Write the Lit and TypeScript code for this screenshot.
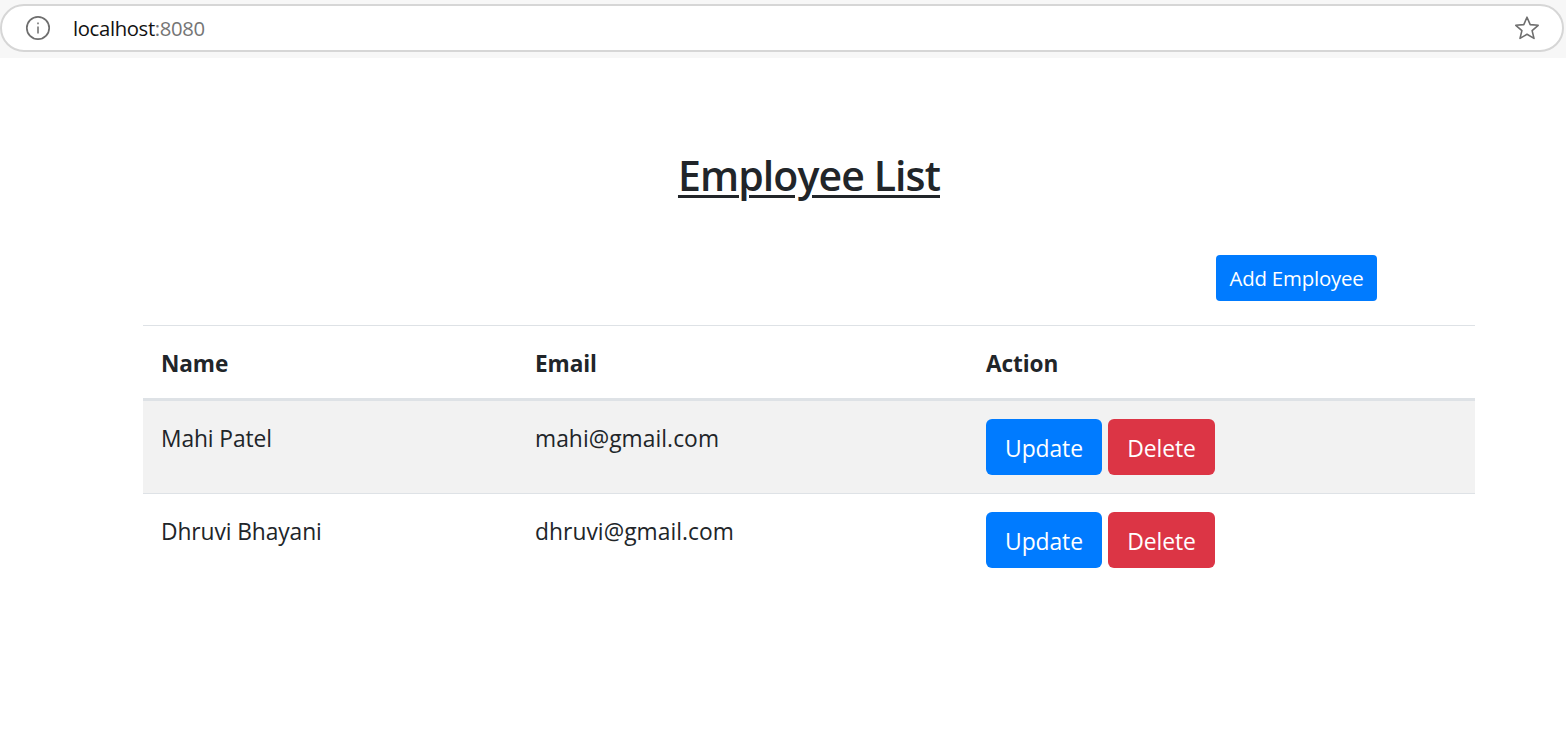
import { LitElement, html, css } from "lit";
import { customElement } from "lit/decorators.js";

const rows = [
  { name: "Mahi Patel", email: "mahi@gmail.com" },
  { name: "Dhruvi Bhayani", email: "dhruvi@gmail.com" },
];

@customElement("app-root")
export class AppRoot extends LitElement {
  static styles = css`
    :host {
      display: block;
      width: 1566px;
      height: 738px;
      overflow: hidden;
      background: #fff;
      color: #212529;
      font-family: "Open Sans", "Noto Sans", "Liberation Sans", sans-serif;
    }
    .chrome {
      height: 58px;
      box-sizing: border-box;
      padding: 4px 2px 6px 0;
      background: #f7f7f7;
    }
    .omni {
      height: 48px;
      box-sizing: border-box;
      background: #fff;
      border: 2px solid #d6d6d6;
      border-radius: 24px;
      display: flex;
      align-items: center;
      padding: 0 22px 0 23px;
    }
    .url {
      margin-left: 22px;
      font-size: 20.3px;
      letter-spacing: -0.35px;
      color: #111;
      flex: 1;
    }
    .url span { color: #757575; }
    main {
      padding: 0 91px 0 143px;
    }
    h1 {
      margin: 0;
      padding-top: 90px;
      height: 54px;
      line-height: 54px;
      font-size: 41px;
      font-weight: 600;
      text-align: center;
      text-decoration: underline;
      text-decoration-thickness: 3px;
      text-underline-offset: 4px;
      letter-spacing: -0.9px;
    }
    .toolbar {
      display: flex;
      justify-content: flex-end;
      padding: 53px 98px 24px 0;
    }
    .btn {
      box-sizing: border-box;
      border: 0;
      color: #fff;
      font: inherit;
      display: block;
      text-align: center;
      padding: 0;
    }
    .add {
      width: 161px;
      height: 46px;
      line-height: 46px;
      font-size: 20.4px;
      letter-spacing: -0.2px;
      background: #007bff;
      border-radius: 4px;
    }
    table {
      width: 100%;
      border-collapse: collapse;
      table-layout: fixed;
      font-size: 22.8px;
      line-height: 36px;
      letter-spacing: -0.1px;
    }
    col.c1 { width: 374px; }
    col.c2 { width: 451px; }
    th, td {
      text-align: left;
      vertical-align: top;
      padding: 18px 18px;
      border-top: 1px solid #dee2e6;
    }
    th {
      font-weight: 700;
      font-size: 22.6px;
      height: 36px;
      padding: 20px 18px 16px;
      border-bottom: 3px solid #dee2e6;
    }
    td.text { padding-top: 20px; }
    td.email { letter-spacing: 0.05px; }
    thead + tbody td { border-top: 0; }
    tbody tr + tr td { border-top: 1px solid #dee2e6; }
    tbody tr:first-child { background: #f2f2f2; }
    .actions {
      display: flex;
      gap: 6px;
    }
    .act {
      height: 56px;
      line-height: 59px;
      font-size: 22.9px;
      letter-spacing: -0.1px;
      border-radius: 6px;
    }
    .update { width: 116px; background: #007bff; }
    .delete { width: 107px; background: #dc3545; }
  `;

  render() {
    return html`
      <div class="chrome">
        <div class="omni">
          <svg width="26" height="26" viewBox="0 0 26 26" fill="none" stroke="#6e6e6e">
            <circle cx="13" cy="13" r="11.2" stroke-width="1.7"></circle>
            <path d="M13 11.5V18.5M13 7.5V9.2" stroke-width="1.5"></path>
          </svg>
          <div class="url">localhost<span>:8080</span></div>
          <svg width="26" height="26" viewBox="0 0 26 26" fill="none" stroke="#6e6e6e" stroke-width="1.6" stroke-linejoin="round">
            <path d="M13 2.2L16.2 9.6L24.2 10.3L18.1 15.6L20 23.4L13 19.3L6 23.4L7.9 15.6L1.8 10.3L9.8 9.6Z"></path>
          </svg>
        </div>
      </div>
      <main>
        <h1>Employee List</h1>
        <div class="toolbar"><button class="btn add">Add Employee</button></div>
        <table>
          <colgroup><col class="c1" /><col class="c2" /><col /></colgroup>
          <thead>
            <tr><th>Name</th><th>Email</th><th>Action</th></tr>
          </thead>
          <tbody>
            ${rows.map(
              (r) => html`<tr>
                <td class="text">${r.name}</td>
                <td class="text email">${r.email}</td>
                <td>
                  <div class="actions">
                    <button class="btn act update">Update</button>
                    <button class="btn act delete">Delete</button>
                  </div>
                </td>
              </tr>`
            )}
          </tbody>
        </table>
      </main>
    `;
  }
}
